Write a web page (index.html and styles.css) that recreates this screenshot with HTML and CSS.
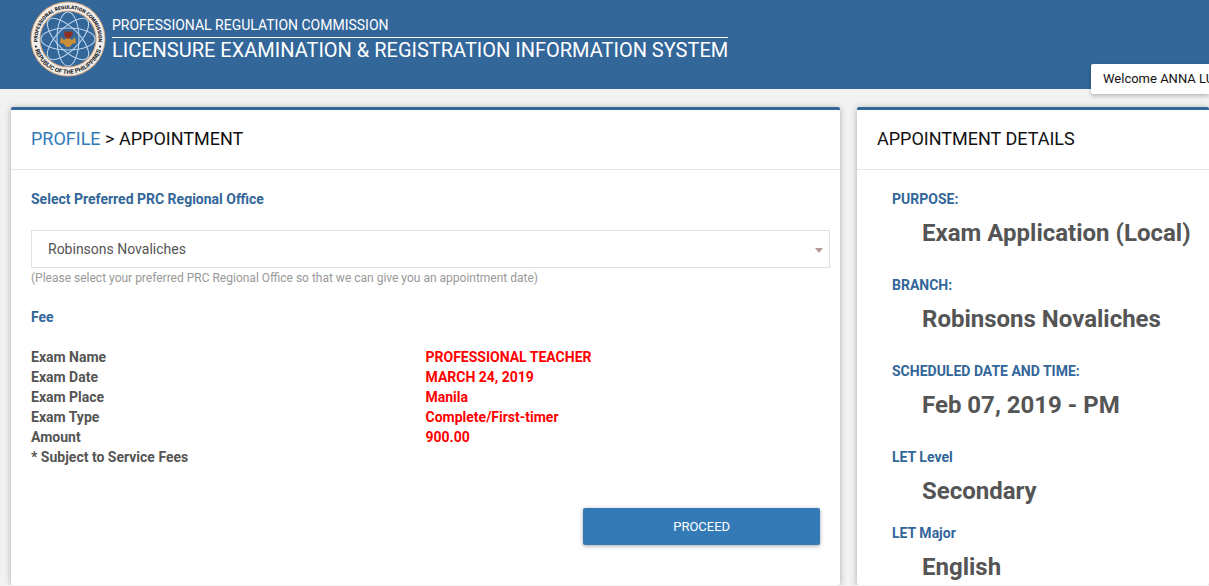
FILE: index.html
```html
<!DOCTYPE html>
<html lang="en">
<head>
<meta charset="utf-8">
<title>Licensure Examination &amp; Registration Information System</title>
<link rel="stylesheet" href="styles.css">
</head>
<body>
<header class="topbar">
  <svg class="seal" viewBox="0 0 76 76" role="img" aria-label="Professional Regulation Commission seal">
    <defs>
      <path id="arc-top" d="M8.5 45.5A30.4 30.4 0 1 1 67.5 45.5"/>
      <path id="arc-bottom" d="M4.7 48.2A34.8 34.8 0 0 0 71.3 48.2"/>
    </defs>
    <circle cx="38" cy="38" r="37.5" fill="#d6a77f"/>
    <circle cx="38" cy="38" r="36.5" fill="#f1eeec"/>
    <circle cx="38" cy="38" r="28.6" fill="#d6a77f"/>
    <circle cx="38" cy="38" r="27.6" fill="#336699"/>
    <g fill="none" stroke="#b9d2ea" stroke-width="1.1">
      <ellipse cx="38" cy="38" rx="11" ry="27"/>
      <ellipse cx="38" cy="38" rx="11" ry="27" transform="rotate(45 38 38)"/>
      <ellipse cx="38" cy="38" rx="11" ry="27" transform="rotate(90 38 38)"/>
      <ellipse cx="38" cy="38" rx="11" ry="27" transform="rotate(135 38 38)"/>
    </g>
    <path d="M31 36l3 3 3-2h2l3 2 3-3 1 6-4 1-2 3h-4l-2-3-4-1z" fill="#c98f38"/>
    <path d="M34 32l2-2 3 1 3-1 1 3-2 3-3 2-3-2z" fill="#8e2f24"/>
    <circle cx="5.9" cy="45.6" r="1.1" fill="#222"/>
    <circle cx="70.1" cy="45.6" r="1.1" fill="#222"/>
    <text class="seal-text"><textPath href="#arc-top" startOffset="50%" text-anchor="middle">PROFESSIONAL REGULATION COMMISSION</textPath></text>
    <text class="seal-text seal-text-large"><textPath href="#arc-bottom" startOffset="50%" text-anchor="middle">REPUBLIC OF THE PHILIPPINES</textPath></text>
  </svg>
  <div class="brand">
    <div class="brand-org">PROFESSIONAL REGULATION COMMISSION</div>
    <h1 class="brand-system">LICENSURE EXAMINATION &amp; REGISTRATION INFORMATION SYSTEM</h1>
  </div>
  <div class="welcome">Welcome ANNA LU</div>
</header>

<main class="columns">
  <section class="panel panel-main">
    <h2 class="panel-title"><a class="crumb" href="#">PROFILE</a> &gt; APPOINTMENT</h2>
    <form class="panel-body">
      <label class="field-label" for="office">Select Preferred PRC Regional Office</label>
      <div class="select-wrap">
        <select class="select" id="office"><option>Robinsons Novaliches</option></select>
      </div>
      <p class="hint">(Please select your preferred PRC Regional Office so that we can give you an appointment date)</p>
      <h3 class="field-label fee-title">Fee</h3>
      <table class="fees">
        <tr><th scope="row">Exam Name</th><td>PROFESSIONAL TEACHER</td></tr>
        <tr><th scope="row">Exam Date</th><td>MARCH 24, 2019</td></tr>
        <tr><th scope="row">Exam Place</th><td>Manila</td></tr>
        <tr><th scope="row">Exam Type</th><td>Complete/First-timer</td></tr>
        <tr><th scope="row">Amount</th><td>900.00</td></tr>
        <tr><th scope="row">* Subject to Service Fees</th><td></td></tr>
      </table>
      <div class="actions"><button class="proceed" type="button">PROCEED</button></div>
    </form>
  </section>

  <section class="panel panel-side">
    <h2 class="panel-title">APPOINTMENT DETAILS</h2>
    <dl class="details">
      <dt>PURPOSE:</dt><dd>Exam Application (Local)</dd>
      <dt>BRANCH:</dt><dd>Robinsons Novaliches</dd>
      <dt>SCHEDULED DATE AND TIME:</dt><dd>Feb 07, 2019 - PM</dd>
      <dt>LET Level</dt><dd class="tight">Secondary</dd>
      <dt>LET Major</dt><dd class="last">English</dd>
    </dl>
  </section>
</main>
</body>
</html>
```
FILE: styles.css
```css
* { box-sizing: border-box; }

body {
  margin: 0;
  background: #f2f2f2;
  color: #555;
  font: 14px/20px Roboto, "Liberation Sans", sans-serif;
}

h1, h2, h3, p, dl, dd { margin: 0; }

.topbar {
  position: relative;
  display: flex;
  align-items: flex-start;
  gap: 6px;
  height: 89px;
  padding: 1px 30px;
  background: #336699;
  color: #fff;
}

.seal { flex: none; width: 76px; height: 76px; }

.seal-text {
  font: 900 5px Roboto, "Liberation Sans", sans-serif;
  fill: #222;
}

.seal-text-large { font-size: 6px; font-weight: 700; }

.brand { padding-top: 14px; white-space: nowrap; }

.brand-org {
  padding-bottom: 2px;
  border-bottom: 1px solid #fff;
}

.brand-system { font-size: 20px; font-weight: 400; line-height: 24px; }

.welcome {
  position: absolute;
  top: 64px;
  right: 0;
  width: 118px;
  padding: 5px 0 5px 12px;
  border-radius: 2px 0 0 2px;
  background: #fff;
  box-shadow: 0 2px 4px rgba(0, 0, 0, .25);
  color: #111;
  font-size: 13px;
  white-space: nowrap;
}

.columns {
  display: flex;
  gap: 17px;
  padding: 18px 0 0 11px;
}

.panel {
  border-top: 3px solid #336699;
  border-radius: 2px;
  background: #fff;
  box-shadow: 0 1px 6px rgba(0, 0, 0, .3);
}

.panel-main { flex: 1; }
.panel-side { flex: 0 0 352px; }

.panel-title {
  padding: 17px 20px 18px;
  border-bottom: 1px solid #e7e7e7;
  color: #111;
  font-size: 18px;
  font-weight: 400;
  line-height: 24px;
}

.crumb { color: #337ab7; text-decoration: none; }

.panel-body { padding: 19px 20px 40px; }

.field-label {
  display: block;
  color: #336699;
  font-size: 14px;
  font-weight: 700;
}

.select-wrap {
  position: relative;
  margin: 21px -10px 0 0;
}

.select-wrap::after {
  content: "";
  position: absolute;
  top: 18px;
  right: 7px;
  border: 4px solid transparent;
  border-top: 5px solid #b39a9a;
  border-bottom: 0;
  pointer-events: none;
}

.select {
  appearance: none;
  display: block;
  width: 100%;
  height: 38px;
  padding: 0 16px;
  border: 1px solid #e0e0e0;
  border-radius: 0;
  background: #fff;
  color: #555;
  font: inherit;
}

.hint { color: #999; font-size: 12px; }

.fee-title { margin: 19px 0 20px; }

.fees {
  width: 100%;
  border-collapse: collapse;
  font-weight: 700;
}

.fees th, .fees td { width: 50%; padding: 0; text-align: left; }
.fees td { color: #f00; }

.actions {
  display: flex;
  justify-content: flex-end;
  padding-top: 41px;
}

.proceed {
  width: 30%;
  height: 37px;
  border: 0;
  border-radius: 2px;
  background: #337ab7;
  box-shadow: 0 1px 4px rgba(0, 0, 0, .35);
  color: #fff;
  font: 13px/20px Roboto, "Liberation Sans", sans-serif;
}

.details { padding: 19px 10px 0 35px; }
.details dt { color: #336699; font-weight: 700; }

.details dd {
  margin: 8px 0 26px 30px;
  font-size: 24px;
  font-weight: 700;
  line-height: 32px;
}

.details .tight { margin-bottom: 16px; }
.details .last { margin-bottom: 0; }
```
